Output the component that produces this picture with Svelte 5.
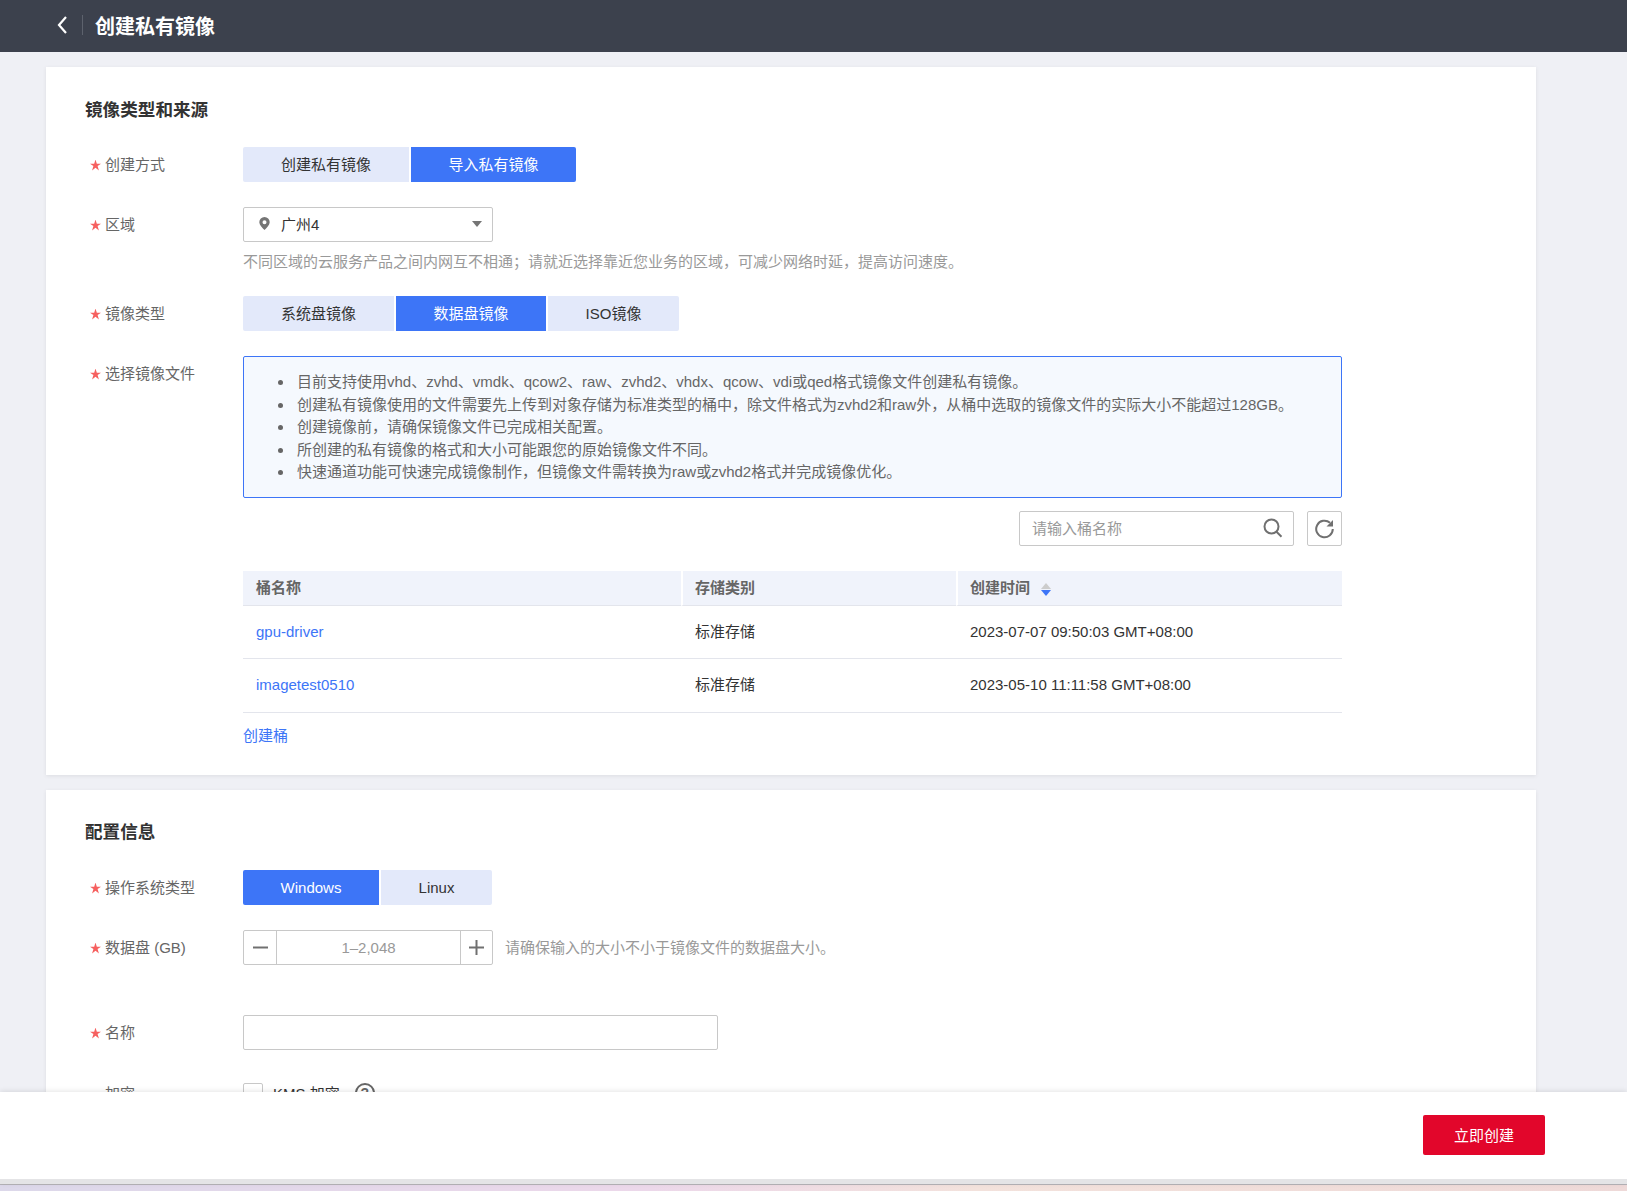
<script>
  const tips = [
    "目前支持使用vhd、zvhd、vmdk、qcow2、raw、zvhd2、vhdx、qcow、vdi或qed格式镜像文件创建私有镜像。",
    "创建私有镜像使用的文件需要先上传到对象存储为标准类型的桶中，除文件格式为zvhd2和raw外，从桶中选取的镜像文件的实际大小不能超过128GB。",
    "创建镜像前，请确保镜像文件已完成相关配置。",
    "所创建的私有镜像的格式和大小可能跟您的原始镜像文件不同。",
    "快速通道功能可快速完成镜像制作，但镜像文件需转换为raw或zvhd2格式并完成镜像优化。",
  ];

  const buckets = [
    { name: "gpu-driver", type: "标准存储", time: "2023-07-07 09:50:03 GMT+08:00" },
    { name: "imagetest0510", type: "标准存储", time: "2023-05-10 11:11:58 GMT+08:00" },
  ];
</script>

<main>
  <header>
    <svg class="back" width="12" height="20" viewBox="0 0 12 20" fill="none">
      <path d="M10 2 3 10l7 8" stroke="#fff" stroke-width="2.2" />
    </svg>
    <i class="divider"></i>
    <h1>创建私有镜像</h1>
  </header>

  <div class="content">
    <section class="card first">
      <h2>镜像类型和来源</h2>

      <div class="row">
        <div class="label"><b></b>创建方式</div>
        <div class="tabs">
          <button class="w166">创建私有镜像</button>
          <button class="w165 on">导入私有镜像</button>
        </div>
      </div>

      <div class="row">
        <div class="label"><b></b>区域</div>
        <div class="ctl">
          <div class="select">
            <svg width="11" height="13" viewBox="0 0 11 13">
              <path fill-rule="evenodd" fill="#757575" d="M5.500 0a5.200 5.200 0 0 1 5.200 5.200c0 2.600-2.900 5.400-5.200 7.800C3.200 10.600.3 7.800.3 5.200A5.200 5.200 0 0 1 5.500 0Zm0 3.200a2 2 0 1 0 0 4 2 2 0 0 0 0-4Z" />
            </svg>
            <span>广州4</span>
            <i class="caret"></i>
          </div>
          <p class="hint">不同区域的云服务产品之间内网互不相通；请就近选择靠近您业务的区域，可减少网络时延，提高访问速度。</p>
        </div>
      </div>

      <div class="row tight">
        <div class="label"><b></b>镜像类型</div>
        <div class="tabs">
          <button class="w151">系统盘镜像</button>
          <button class="w150 on">数据盘镜像</button>
          <button class="w131">ISO镜像</button>
        </div>
      </div>

      <div class="row last">
        <div class="label"><b></b>选择镜像文件</div>
        <div class="ctl wide">
          <ul class="tips">
            {#each tips as tip}
              <li>{tip}</li>
            {/each}
          </ul>

          <div class="tools">
            <div class="search">
              <span>请输入桶名称</span>
              <svg width="20" height="20" viewBox="0 0 20 20" fill="none" stroke="#707070" stroke-width="2">
                <circle cx="8.500" cy="8.500" r="7" />
                <path d="m13.500 13.800 5 5" />
              </svg>
            </div>
            <div class="refresh">
              <svg width="20" height="20" viewBox="0 0 20 20" fill="none">
                <path d="M15 3.800A8.300 8.300 0 1 0 17.800 10" stroke="#707070" stroke-width="2" />
                <path d="M18 1v6.500h-6.500z" fill="#707070" />
              </svg>
            </div>
          </div>

          <table>
            <colgroup>
              <col style="width: 438px" />
              <col style="width: 275px" />
              <col />
            </colgroup>
            <thead>
              <tr>
                <th>桶名称</th>
                <th>存储类别</th>
                <th>
                  创建时间<span class="sort"><i></i><i></i></span>
                </th>
              </tr>
            </thead>
            <tbody>
              {#each buckets as bucket}
                <tr>
                  <td><a href="#top">{bucket.name}</a></td>
                  <td>{bucket.type}</td>
                  <td>{bucket.time}</td>
                </tr>
              {/each}
            </tbody>
          </table>

          <a class="create" href="#top">创建桶</a>
        </div>
      </div>
    </section>

    <section class="card">
      <h2>配置信息</h2>

      <div class="row">
        <div class="label"><b></b>操作系统类型</div>
        <div class="tabs latin">
          <button class="w136 on">Windows</button>
          <button class="w111">Linux</button>
        </div>
      </div>

      <div class="row">
        <div class="label"><b></b>数据盘 (GB)</div>
        <div class="stepper">
          <span class="step minus">
            <svg width="15" height="15" viewBox="0 0 15 15"><path d="M0 7.500h15" stroke="#707070" stroke-width="2" /></svg>
          </span>
          <span class="num">1–2,048</span>
          <span class="step plus">
            <svg width="15" height="15" viewBox="0 0 15 15"><path d="M0 7.500h15M7.500 0v15" stroke="#707070" stroke-width="2" /></svg>
          </span>
        </div>
        <p class="side-hint">请确保输入的大小不小于镜像文件的数据盘大小。</p>
      </div>

      <div class="row name">
        <div class="label"><b></b>名称</div>
        <div class="text-input"></div>
      </div>

      <div class="row encrypt">
        <div class="label"><b class="blank"></b>加密</div>
        <span class="check"></span>
        <span class="kms">KMS 加密</span>
        <span class="help">?</span>
      </div>
    </section>
  </div>

  <footer>
    <button class="submit">立即创建</button>
  </footer>
  <div class="strip"></div>
</main>

<style>
  :global(body) {
    margin: 0;
    background: #eff0f5;
    color: #333;
    font-family: "Liberation Sans", "Noto Sans CJK SC", sans-serif;
    font-size: 15px;
  }

  main {
    height: 1191px;
    display: flex;
    flex-direction: column;
    overflow: hidden;
  }

  header {
    flex: none;
    height: 52px;
    box-sizing: border-box;
    display: flex;
    align-items: center;
    background: #3c414d;
    padding: 0 0 2px 56px;
    color: #fff;
  }

  .back {
    margin-right: 14px;
  }

  .divider {
    width: 1px;
    height: 20px;
    background: #5d626d;
    margin-right: 12px;
  }

  h1 {
    margin: 0;
    font-size: 20px;
    font-weight: 700;
  }

  .content {
    flex: 1;
    min-height: 0;
    overflow: hidden;
    padding: 15px 0 0 46px;
  }

  .card {
    width: 1490px;
    box-sizing: border-box;
    background: #fff;
    padding: 30px 40px 28px;
    box-shadow: 0 1px 4px rgba(0, 0, 0, 0.08);
  }

  .card.first {
    margin-bottom: 15px;
    padding-top: 31px;
  }

  .card.first h2 {
    margin-bottom: 25px;
  }

  h2 {
    margin: 0 0 26px -1px;
    font-size: 17.6px;
    line-height: 24px;
    font-weight: 700;
    color: #333;
  }

  .row {
    display: flex;
    align-items: flex-start;
    margin-bottom: 25px;
  }

  .row.last {
    margin-bottom: 0;
  }

  .row.tight {
    margin-top: -2px;
  }

  .row.name {
    margin-top: 50px;
    margin-bottom: 33px;
  }

  .label {
    flex: none;
    width: 157px;
    height: 35px;
    box-sizing: border-box;
    padding-bottom: 2px;
    display: flex;
    align-items: center;
    color: #666;
    white-space: pre;
  }

  .label b {
    flex: none;
    width: 11px;
    height: 11px;
    margin: 3px 4px 0 4px;
    background: #f6605f;
    clip-path: polygon(50% 0, 62% 38%, 100% 38%, 69% 60%, 81% 100%, 50% 76%, 19% 100%, 31% 60%, 0 38%, 38% 38%);
  }

  .label b.blank {
    background: none;
  }

  .tabs {
    display: flex;
    gap: 2px;
  }

  .tabs button {
    height: 35px;
    border: 0;
    padding: 0 0 2px;
    background: #e3e9fa;
    color: #333;
    font: inherit;
  }

  .tabs.latin button {
    padding: 0;
  }

  .tabs button:first-child {
    border-radius: 2px 0 0 2px;
  }

  .tabs button:last-child {
    border-radius: 0 2px 2px 0;
  }

  .tabs button.on {
    background: #3d75f7;
    color: #fff;
  }

  .w166 { width: 166px; }
  .w165 { width: 165px; }
  .w151 { width: 151px; }
  .w150 { width: 150px; }
  .w131 { width: 131px; }
  .w136 { width: 136px; }
  .w111 { width: 111px; }

  .select {
    width: 250px;
    height: 35px;
    box-sizing: border-box;
    border: 1px solid #c8c8c8;
    border-radius: 2px;
    display: flex;
    align-items: center;
    padding: 0 10px 2px 15px;
  }

  .select span {
    margin-left: 11px;
  }

  .caret {
    margin-left: auto;
    border: 5px solid transparent;
    border-top: 6px solid #757575;
    border-bottom: 0;
  }

  .hint {
    margin: 9px 0 0;
    line-height: 22px;
    color: #999;
  }

  .wide {
    width: 1099px;
  }

  .tips {
    margin: 0;
    box-sizing: border-box;
    height: 142px;
    border: 1px solid #3d75f7;
    border-radius: 2px;
    background: #f5f9fe;
    padding: 14px 0 0 53px;
    color: #666;
    line-height: 22.5px;
    list-style: none;
  }

  .tips li {
    position: relative;
  }

  .tips li::before {
    content: "";
    position: absolute;
    left: -19px;
    top: 9px;
    width: 5px;
    height: 5px;
    border-radius: 50%;
    background: #666;
  }

  .tools {
    display: flex;
    justify-content: flex-end;
    gap: 13px;
    margin: 13px 0 25px;
  }

  .search,
  .refresh {
    height: 35px;
    box-sizing: border-box;
    border: 1px solid #c8c8c8;
    border-radius: 2px;
    display: flex;
    align-items: center;
  }

  .search {
    width: 275px;
    justify-content: space-between;
    padding: 0 10px 2px 12px;
    color: #999;
  }

  .search svg {
    margin-top: 1px;
  }

  .refresh {
    width: 35px;
    justify-content: center;
  }

  table {
    width: 100%;
    border-collapse: separate;
    border-spacing: 0;
    table-layout: fixed;
  }

  th {
    height: 35px;
    padding: 0 0 3px 12px;
    text-align: left;
    background: #f0f3fb;
    border-left: 2px solid #fff;
    border-bottom: 1px solid #e3e5ec;
    color: #666;
    font-weight: 700;
    box-sizing: border-box;
  }

  th:first-child {
    border-left: 0;
    padding-left: 13px;
  }

  td {
    height: 54px;
    padding: 0 0 2px 14px;
    border-bottom: 1px solid #e3e5ec;
    box-sizing: border-box;
  }

  tr:first-child td {
    height: 53px;
  }

  td:first-child {
    padding-left: 13px;
  }

  td:nth-child(2) {
    padding-bottom: 4px;
  }

  a {
    color: #3d75f7;
    text-decoration: none;
  }

  .sort {
    display: inline-block;
    margin-left: 11px;
    vertical-align: middle;
  }

  .sort i {
    display: block;
    width: 0;
    border: 5px solid transparent;
    border-top: 0;
    border-bottom: 6px solid #ccc;
    margin-bottom: 1px;
  }

  .sort i:last-child {
    border-bottom: 0;
    border-top: 6px solid #3d75f7;
    margin-bottom: 0;
  }

  .create {
    display: block;
    margin-top: 12px;
    line-height: 22px;
  }

  .stepper {
    width: 250px;
    height: 35px;
    box-sizing: border-box;
    border: 1px solid #c8c8c8;
    border-radius: 2px;
    display: flex;
    align-items: center;
  }

  .step {
    flex: none;
    height: 100%;
    display: flex;
    align-items: center;
    justify-content: center;
  }

  .minus {
    width: 32px;
  }

  .plus {
    width: 31px;
  }

  .num {
    flex: 1;
    height: 100%;
    line-height: 33px;
    text-align: center;
    color: #999;
    border-left: 1px solid #c8c8c8;
    border-right: 1px solid #c8c8c8;
  }

  .side-hint {
    margin: 1px 0 0 12px;
    line-height: 34px;
    color: #999;
  }

  .text-input {
    width: 475px;
    height: 35px;
    box-sizing: border-box;
    border: 1px solid #c8c8c8;
    border-radius: 2px;
  }

  .encrypt .label {
    height: 22px;
    align-items: flex-start;
    line-height: 22px;
    padding-bottom: 0;
  }

  .check {
    width: 20px;
    height: 20px;
    box-sizing: border-box;
    border: 1px solid #c8c8c8;
    border-radius: 2px;
    margin-right: 10px;
  }

  .kms {
    line-height: 22px;
    margin-right: 15px;
  }

  .help {
    width: 20px;
    height: 20px;
    box-sizing: border-box;
    border: 2px solid #666;
    border-radius: 50%;
    text-align: center;
    line-height: 16px;
    font-size: 14px;
    font-weight: 700;
    color: #666;
  }

  footer {
    flex: none;
    height: 86px;
    display: flex;
    align-items: center;
    justify-content: flex-end;
    padding: 0 82px 1px 0;
    background: #fff;
    border-bottom: 5px solid #e4e4e6;
    box-shadow: 0 -1px 5px rgba(0, 0, 0, 0.1);
    position: relative;
  }

  .submit {
    width: 122px;
    height: 40px;
    border: 0;
    border-radius: 2px;
    background: #e2062b;
    color: #fff;
    font: inherit;
    padding: 0 0 2px;
  }

  .strip {
    flex: none;
    height: 7px;
    box-sizing: border-box;
    border-top: 1px solid #b5b3b8;
    background: linear-gradient(90deg, #dcd8ea, #ecd8ea 40%, #f3e2dc 60%, #eed9d8);
  }
</style>
